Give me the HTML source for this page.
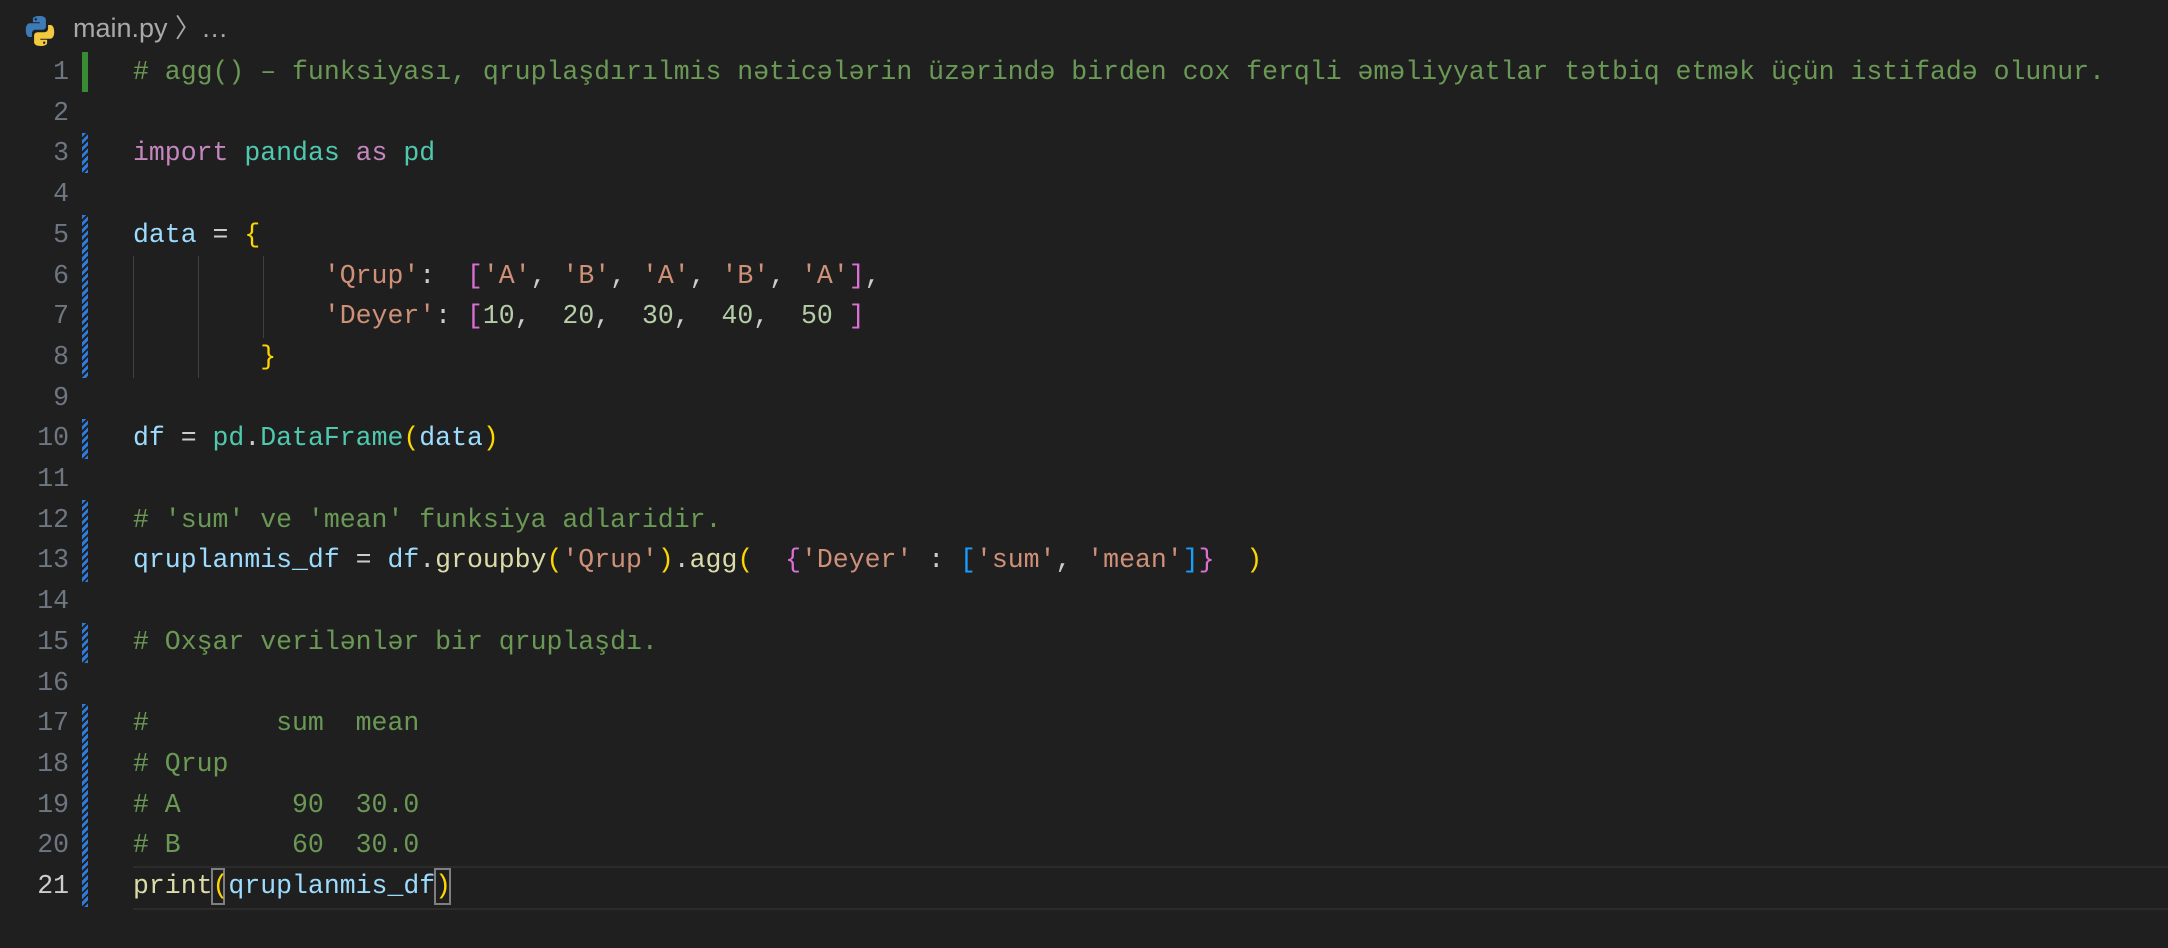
<!DOCTYPE html>
<html><head><meta charset="utf-8"><style>
body{margin:0;width:2168px;height:948px;background:#1f1f1f;overflow:hidden;position:relative;font-family:"Liberation Mono",monospace;}
.bc{position:absolute;left:73px;top:9px;font-family:"Liberation Sans",sans-serif;font-size:27px;color:#a9a9a9;line-height:38px;}
.ln{position:absolute;left:0;width:69px;text-align:right;font-size:26.5px;color:#6e7681;line-height:40.7px;}
.code{position:absolute;left:133px;font-size:26.5px;line-height:40.7px;white-space:pre;color:#cccccc;}
.c{color:#6a9955}.k{color:#c586c0}.m{color:#4ec9b0}.v{color:#9cdcfe}.s{color:#ce9178}.n{color:#b5cea8}.f{color:#dcdcaa}
.b1{color:#ffd700}.b2{color:#da70d6}.b3{color:#179fff}
.hat{position:absolute;left:82px;width:6px;background:repeating-linear-gradient(135deg,#2f7bd9 0 3px,#1f1f1f 3px 5px);}
.guide{position:absolute;width:1px;background:#404040;}
</style></head><body>
<svg style="position:absolute;left:22px;top:13px" width="36" height="36" viewBox="0 0 36 36">
<path d="M17.5 3c-7 0-6.6 3-6.6 3v3.2h6.8v1H8.2S3.8 9.7 3.8 17s3.8 7 3.8 7h2.3v-3.4s-.1-3.8 3.8-3.8h6.6s3.6.1 3.6-3.5V7.1S24.5 3 17.5 3zm-3.7 2.1a1.2 1.2 0 1 1 0 2.4 1.2 1.2 0 0 1 0-2.4z" fill="#3d7ab8"/>
<path d="M18.5 33c7 0 6.6-3 6.6-3v-3.2h-6.8v-1h9.5s4.4.5 4.4-6.8-3.8-7-3.8-7h-2.3v3.4s.1 3.8-3.8 3.8h-6.6s-3.6-.1-3.6 3.5v6.2S11.5 33 18.5 33zm3.7-2.1a1.2 1.2 0 1 1 0-2.4 1.2 1.2 0 0 1 0 2.4z" fill="#f3c93f"/>
</svg>
<div class="bc">main.py&nbsp;<span style="font-size:26px">〉</span>…</div>
<div style="position:absolute;left:133px;right:0;top:866px;height:40px;border-top:2px solid #2b2b2b;border-bottom:2px solid #2b2b2b;"></div>
<div style="position:absolute;left:211px;top:868px;width:14px;height:37px;border:2px solid #7f7f7f;box-sizing:border-box"></div>
<div style="position:absolute;left:434px;top:868px;width:17px;height:37px;border:2px solid #7f7f7f;box-sizing:border-box"></div>
<div style="position:absolute;left:82px;top:52px;width:6px;height:40px;background:#388a34"></div>
<div class="hat" style="top:133px;height:40px"></div>
<div class="hat" style="top:215px;height:163px"></div>
<div class="hat" style="top:419px;height:40px"></div>
<div class="hat" style="top:500px;height:82px"></div>
<div class="hat" style="top:623px;height:40px"></div>
<div class="hat" style="top:704px;height:203px"></div>
<div class="guide" style="left:133px;top:256px;height:122px"></div>
<div class="guide" style="left:198px;top:256px;height:122px"></div>
<div class="guide" style="left:263px;top:256px;height:82px"></div>
<div class="ln" style="top:52px">1<br>2<br>3<br>4<br>5<br>6<br>7<br>8<br>9<br>10<br>11<br>12<br>13<br>14<br>15<br>16<br>17<br>18<br>19<br>20<br><span style="color:#cccccc">21</span></div>
<div class="code" style="top:52px"><span class="c"># agg() – funksiyası, qruplaşdırılmis nəticələrin üzərində birden cox ferqli əməliyyatlar tətbiq etmək üçün istifadə olunur.</span>

<span class="k">import</span> <span class="m">pandas</span> <span class="k">as</span> <span class="m">pd</span>

<span class="v">data</span> = <span class="b1">{</span>
            <span class="s">'Qrup'</span>:  <span class="b2">[</span><span class="s">'A'</span>, <span class="s">'B'</span>, <span class="s">'A'</span>, <span class="s">'B'</span>, <span class="s">'A'</span><span class="b2">]</span>,
            <span class="s">'Deyer'</span>: <span class="b2">[</span><span class="n">10</span>,  <span class="n">20</span>,  <span class="n">30</span>,  <span class="n">40</span>,  <span class="n">50</span> <span class="b2">]</span>
        <span class="b1">}</span>

<span class="v">df</span> = <span class="m">pd</span>.<span class="m">DataFrame</span><span class="b1">(</span><span class="v">data</span><span class="b1">)</span>

<span class="c"># 'sum' ve 'mean' funksiya adlaridir.</span>
<span class="v">qruplanmis_df</span> = <span class="v">df</span>.<span class="f">groupby</span><span class="b1">(</span><span class="s">'Qrup'</span><span class="b1">)</span>.<span class="f">agg</span><span class="b1">(</span>  <span class="b2">{</span><span class="s">'Deyer'</span> : <span class="b3">[</span><span class="s">'sum'</span>, <span class="s">'mean'</span><span class="b3">]</span><span class="b2">}</span>  <span class="b1">)</span>

<span class="c"># Oxşar verilənlər bir qruplaşdı.</span>

<span class="c">#        sum  mean</span>
<span class="c"># Qrup</span>
<span class="c"># A       90  30.0</span>
<span class="c"># B       60  30.0</span>
<span class="f">print</span><span class="b1">(</span><span class="v">qruplanmis_df</span><span class="b1">)</span></div>
</body></html>
